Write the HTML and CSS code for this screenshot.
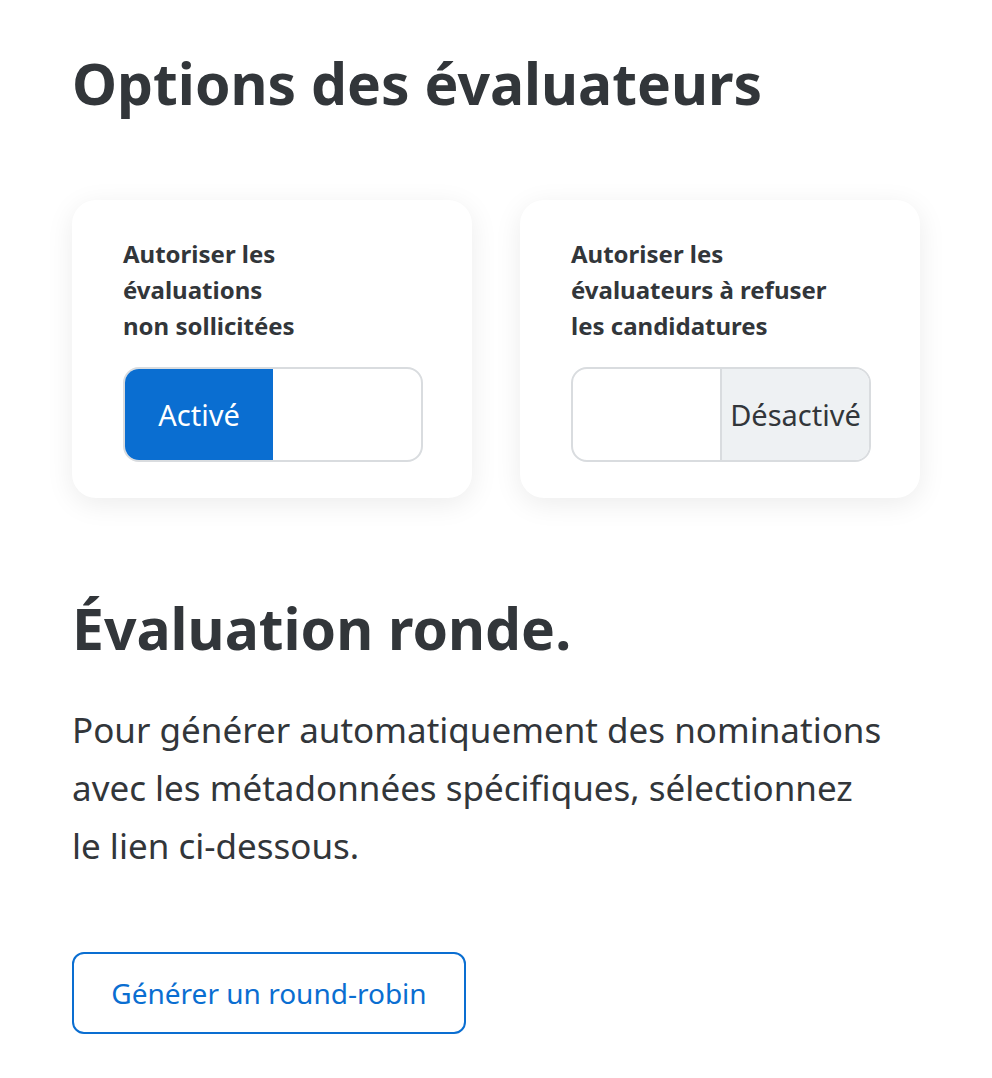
FILE: index.html
```html
<!DOCTYPE html>
<html lang="fr">
<head>
    <meta charset="UTF-8">
    <meta name="viewport" content="width=device-width, initial-scale=1.0">
    <title>Options des évaluateurs</title>
    <link rel="stylesheet" href="styles.css">
</head>
<body>

    <main class="page">
        <h1 class="title">Options des évaluateurs</h1>

        <section class="cards">
            <div class="card">
                <p class="card-label">Autoriser les<br>évaluations<br>non sollicitées</p>
                <div class="switch">
                    <span class="switch-half on">Activé</span>
                    <span class="switch-half"></span>
                </div>
            </div>

            <div class="card">
                <p class="card-label">Autoriser les<br>évaluateurs à refuser<br>les candidatures</p>
                <div class="switch">
                    <span class="switch-half"></span>
                    <span class="switch-half off">Désactivé</span>
                </div>
            </div>
        </section>

        <h2 class="subtitle">Évaluation ronde.</h2>
        <p class="intro">Pour générer automatiquement des nominations<br>avec les métadonnées spécifiques, sélectionnez<br>le lien ci-dessous.</p>

        <button type="button" class="link-btn">Générer un round-robin</button>
    </main>

</body>
</html>
```

FILE: styles.css
```css
body {
    margin: 0;
    background: #ffffff;
    font-family: "Noto Sans", "Open Sans", sans-serif;
    color: #32363a;
}
.page {
    padding: 43px 72px 40px 72px;
}
.title {
    margin: 0;
    font-size: 57px;
    font-weight: 700;
    line-height: 80px;
}
.cards {
    display: flex;
    gap: 48px;
    margin-top: 77px;
}
.card {
    width: 400px;
    box-sizing: border-box;
    padding: 36px 50px 36px 51px;
    background: white;
    border-radius: 24px;
    box-shadow: 0 6px 28px rgba(0, 0, 0, 0.08);
}
.card-label {
    margin: 0;
    font-size: 24px;
    font-weight: 700;
    line-height: 36px;
}
.switch {
    display: flex;
    width: 300px;
    height: 95px;
    margin-top: 23px;
    box-sizing: border-box;
    border: 2px solid #d9dcdf;
    border-radius: 16px;
    overflow: hidden;
}
.switch-half {
    flex: 1;
    display: flex;
    align-items: center;
    justify-content: center;
    font-size: 29px;
}
.switch-half.on {
    background: #0a6ed1;
    color: white;
}
.switch-half.off {
    background: #eef1f3;
    border-left: 2px solid #d9dcdf;
}
.subtitle {
    margin: 90px 0 0 0;
    font-size: 57px;
    font-weight: 700;
    line-height: 80px;
}
.intro {
    margin: 33px 0 0 0;
    font-size: 35px;
    line-height: 58px;
}
.link-btn {
    margin-top: 77px;
    width: 394px;
    height: 82px;
    background: white;
    border: 2px solid #0a6ed1;
    border-radius: 12px;
    color: #0a6ed1;
    font-family: inherit;
    font-size: 28px;
    cursor: pointer;
}
```
